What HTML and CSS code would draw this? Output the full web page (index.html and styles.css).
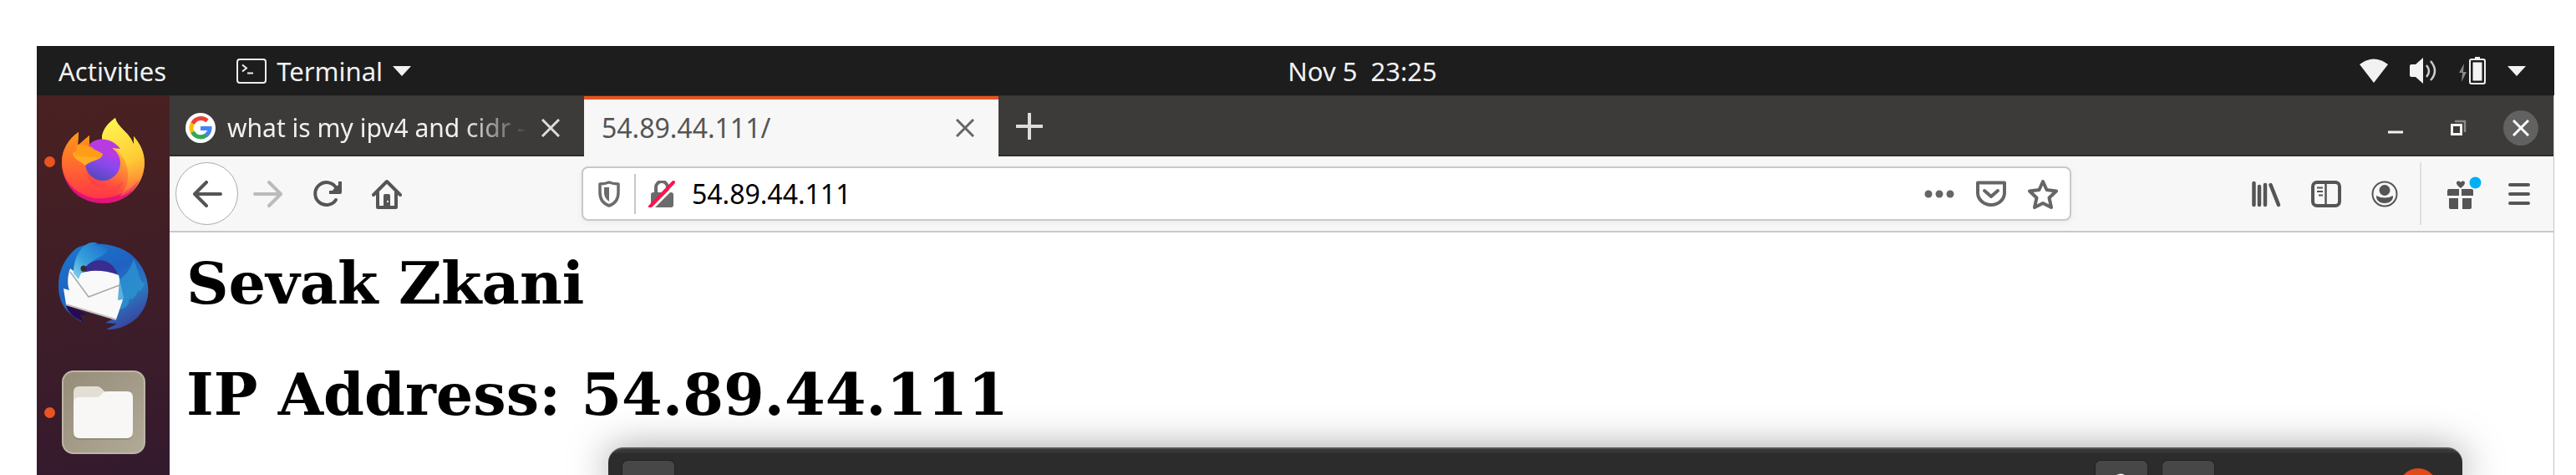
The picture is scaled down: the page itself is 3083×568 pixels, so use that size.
FILE: index.html
```html
<!DOCTYPE html>
<html lang="en">
<head>
<meta charset="utf-8">
<title>54.89.44.111/</title>
<link rel="stylesheet" href="styles.css">
</head>
<body>
<div class="desktop">
  <header class="topbar">
    <div class="topbar-side">
      <button class="top-btn">Activities</button>
      <button class="top-btn app-menu">
        <svg width="36" height="30" viewBox="0 0 36 30" fill="none"><rect x="1" y="1" width="34" height="28" rx="3" stroke="#eee" stroke-width="2"/><path d="M7 7.500l5 4-5 4" stroke="#eee" stroke-width="2"/><path d="M13 17.500h7" stroke="#eee" stroke-width="2"/></svg>
        <span>Terminal</span>
        <svg width="22" height="12" viewBox="0 0 22 12"><path d="M0 0h22L11 12z" fill="#f2f2f2"/></svg>
      </button>
    </div>
    <button class="top-btn clock">Nov 5&nbsp; 23:25</button>
    <div class="topbar-side tray">
      <svg width="34" height="30" viewBox="0 0 34 30"><path d="M0 7Q17-6 34 7L17 29z" fill="#f2f2f2"/></svg>
      <svg width="34" height="32" viewBox="0 0 34 32" fill="none"><path d="M1 10q0-2 2-2h5l9-8v31l-9-8H3q-2 0-2-2z" fill="#f2f2f2"/><path d="M21 9q6 7 0 14M26 4q10 12 0 23" stroke="#ccc" stroke-width="2.500"/></svg>
      <svg width="34" height="34" viewBox="0 0 34 34" fill="none"><path d="M7 8L1 19h4l-1 11 6-12H6z" fill="#888"/><path d="M20 0h6v3h-6z" fill="#f2f2f2"/><rect x="14" y="3" width="18" height="29" rx="2" stroke="#f2f2f2" stroke-width="2"/><path d="M17.500 6.500h11v22h-11z" fill="#f2f2f2"/></svg>
      <svg width="22" height="12" viewBox="0 0 22 12"><path d="M0 0h22L11 12z" fill="#f2f2f2"/></svg>
    </div>
  </header>

  <div class="workspace">
    <nav class="dock">
      <button class="dock-item running" aria-label="Firefox">
        <svg width="108" height="108" viewBox="0 0 108 108">
          <defs>
            <linearGradient id="fx" x1=".75" y1=".1" x2=".3" y2="1"><stop offset="0" stop-color="#fff44f"/><stop offset=".3" stop-color="#ffb42e"/><stop offset=".55" stop-color="#ff7139"/><stop offset=".78" stop-color="#ff3647"/><stop offset="1" stop-color="#e31587"/></linearGradient>
            <linearGradient id="fy" x1=".3" y1="0" x2=".6" y2="1"><stop offset="0" stop-color="#fff44f"/><stop offset=".6" stop-color="#ffcb36"/><stop offset="1" stop-color="#ff8a3a" stop-opacity=".3"/></linearGradient>
            <linearGradient id="fp" x1=".7" y1="0" x2=".3" y2="1"><stop offset="0" stop-color="#c139e6"/><stop offset=".5" stop-color="#8a48ee"/><stop offset="1" stop-color="#5148b8"/></linearGradient>
            <linearGradient id="fo" x1="0" y1="0" x2="0" y2="1"><stop offset="0" stop-color="#ff9a16"/><stop offset=".5" stop-color="#ff6a30"/><stop offset="1" stop-color="#ff3647"/></linearGradient>
          </defs>
          <path d="M24 19l-1 16 14-12v12l15-8C53 17 60 9 68 2c2 11 18 18 22 32v-10c9 10 13 21 13 31 0 28-22 49-49 49S4 84 4 55C4 40 12 27 24 19z" fill="url(#fx)"/>
          <path d="M7 71c14 27 56 42 90 5-9 20-26 28-43 28C31 104 13 92 7 71z" fill="#df0f7b" opacity=".85"/>
          <path d="M52 33C50 18 58 9 68 2c2 11 18 18 22 32v-10c12 14 15 31 11 45-4 14-15 24-28 27 15-15 13-42-4-56z" fill="url(#fy)"/>
          <path d="M24 19l-1 16 14-12v12c4 3 9 6 15 11l2 3c-9 2-21 4-21 14 0 24 30 30 44 14-2 16-18 23-34 21C22 94 4 78 4 55 4 40 12 27 24 19z" fill="url(#fo)"/>
          <path d="M37 23h15v7L39 37z" fill="#482121"/>
          <circle cx="53" cy="56" r="21" fill="url(#fp)"/>
          <path d="M36 35c8-11 28-10 38 4l-11-1c6 6 8 11 7 15z" fill="#b83be2"/>
          <path d="M17 44c7-3 16-3 22-1l14 2c-1 8-13 7-21 14-6-6-13-6-15-15z" fill="#ffad22"/>
          <path d="M23 34c8-1 17 4 30 11l-4 5-30-3z" fill="#ff9c18"/>
        </svg>
      </button>
      <button class="dock-item" aria-label="Thunderbird">
        <svg width="108" height="108" viewBox="0 0 108 108">
          <defs>
            <linearGradient id="tb" x1=".2" y1="0" x2=".8" y2="1"><stop offset="0" stop-color="#1b76cc"/><stop offset=".4" stop-color="#1f62c2"/><stop offset=".7" stop-color="#2c77bd"/><stop offset="1" stop-color="#3a3c9c"/></linearGradient>
            <linearGradient id="th" x1="0" y1="1" x2="1" y2="0"><stop offset="0" stop-color="#8ed3ee"/><stop offset=".4" stop-color="#36a0dc"/><stop offset="1" stop-color="#1c6dca"/></linearGradient>
          </defs>
          <path d="M20 9C32 0 70-2 92 20c20 22 20 52 3 70-10 10-24 16-38 15l13-7-14-1 12-6L9 76l19 20C10 86 0 74 0 53 0 34 7 21 20 9z" fill="url(#tb)"/>
          <path d="M9 76c5 3 17 6 26 12l-9-1 3 8C19 92 11 84 9 76z" fill="#250a54"/>
          <path d="M32 30c14-13 32-9 39 9-10-3-25-4-39 0z" fill="#3a2c91"/>
          <path d="M14 32l8 6 17-3q18-1 33 5l6 27-9 26L9 75 6 56l7 2c-3-8-2-18 1-26z" fill="#f9f9fa"/>
          <path d="M14 36l22 30 37-14" fill="none" stroke="#aaa" stroke-width="1.500"/>
          <path d="M9 75l60 18" stroke="#c5c5c5" stroke-width="2"/>
          <path d="M18 38C18 14 33-4 47 2l-5 2c19 1 23 7 4 16-13 7-18 14-22 25z" fill="url(#th)"/>
          <path d="M73 45c8-4 14-15 17-24 7 17 8 32 14 27-3 10-8 13-9 10-2 9-9 13-10 10 0 8-7 13-11 13l3-12-6 1z" fill="#2b96d2" opacity=".75"/>
          <circle cx="30" cy="32" r="3.500" fill="#31302b"/>
        </svg>
      </button>
      <button class="dock-item running" aria-label="Files">
        <svg width="108" height="108" viewBox="0 0 108 108">
          <defs><linearGradient id="ff" x1="0" y1="0" x2="1" y2="1"><stop offset="0" stop-color="#958d78"/><stop offset=".5" stop-color="#a39b88"/><stop offset="1" stop-color="#b0aa97"/></linearGradient></defs>
          <rect x="5" y="5" width="98" height="98" rx="13" fill="url(#ff)" stroke="#bbb7a6" stroke-width="2"/>
          <path d="M18 30q0-7 7-7h21q3 0 5 2l5 5v10l-38 30z" fill="#e3dfd5"/>
          <path d="M18 44q0-7 7-7h20q3 0 5-2l3-3q2-2 5-2h24q7 0 7 7v42q0 8-7 8H25q-7 0-7-8z" fill="#776f5e" opacity=".4"/>
          <path d="M18 43q0-7 7-7h20q3 0 5-2l3-3q2-2 5-2h24q7 0 7 7v41q0 8-7 8H25q-7 0-7-8z" fill="#f8f7f6"/>
        </svg>
      </button>
    </nav>

    <main class="browser">
      <div class="tabstrip">
        <div class="tab">
          <svg width="36" height="36" viewBox="0 0 36 36" fill="none" stroke-width="5"><circle cx="18" cy="18" r="18" fill="#fff"/><path d="M26 9.500A11 11 0 0 0 8.500 13" stroke="#ea4335"/><path d="M8.500 12.500a11 11 0 0 0 0 11" stroke="#fbbc05"/><path d="M8.500 23A11 11 0 0 0 25 26.500" stroke="#34a853"/><path d="M18 18.500h11q0 5-4.500 8.500" stroke="#4285f4"/></svg>
          <span class="tab-title fade">what is my ipv4 and cidr -</span>
          <button class="icon-btn" aria-label="Close tab"><svg width="22" height="22" viewBox="0 0 22 22" stroke="#ddd" stroke-width="3"><path d="M1 1l20 20M21 1L1 21"/></svg></button>
        </div>
        <div class="tab active">
          <span class="tab-title">54.89.44.111/</span>
          <button class="icon-btn" aria-label="Close tab"><svg width="22" height="22" viewBox="0 0 22 22" stroke="#666" stroke-width="3"><path d="M1 1l20 20M21 1L1 21"/></svg></button>
        </div>
        <button class="icon-btn new-tab" aria-label="New tab"><svg width="32" height="32" viewBox="0 0 32 32" stroke="#ddd" stroke-width="4"><path d="M16 0v32M0 16h32"/></svg></button>
        <div class="window-controls">
          <button class="icon-btn win" aria-label="Minimize"><svg width="20" height="20" viewBox="0 0 20 20"><path d="M1 15h18" stroke="#f2f2f2" stroke-width="3"/></svg></button>
          <button class="icon-btn win" aria-label="Restore"><svg width="20" height="20" viewBox="0 0 20 20" fill="none"><path d="M6 2h12v13" stroke="#888" stroke-width="2.500"/><path d="M2.500 6.500h11v11h-11z" stroke="#f2f2f2" stroke-width="3"/></svg></button>
          <button class="icon-btn win close" aria-label="Close"><svg width="20" height="20" viewBox="0 0 20 20" stroke="#fff" stroke-width="3"><path d="M1 1l18 18M19 1L1 19"/></svg></button>
        </div>
      </div>

      <div class="toolbar">
        <div class="nav-buttons">
          <button class="icon-btn back" aria-label="Back"><svg width="36" height="32" viewBox="0 0 36 32" fill="none" stroke="#555" stroke-width="4" stroke-linecap="round" stroke-linejoin="round"><path d="M34 16H3M17 2L3 16l14 14"/></svg></button>
          <button class="icon-btn nav" aria-label="Forward"><svg width="36" height="32" viewBox="0 0 36 32" fill="none" stroke="#bbb" stroke-width="4" stroke-linecap="round" stroke-linejoin="round"><path d="M2 16h31M19 2l14 14-14 14"/></svg></button>
          <button class="icon-btn nav" aria-label="Reload"><svg width="36" height="36" viewBox="0 0 36 36" fill="none" stroke="#555" stroke-width="4"><path d="M28 25A13.500 13.500 0 1 1 28.500 11" stroke-linecap="round"/><path d="M33 3v13H20" stroke-linejoin="round"/><path d="M28 9l5-3v10H22z" fill="#555" stroke="none"/></svg></button>
          <button class="icon-btn nav" aria-label="Home"><svg width="36" height="36" viewBox="0 0 36 36" fill="none" stroke="#555" stroke-width="4" stroke-linejoin="round" stroke-linecap="round"><path d="M2 19L18 3l16 16M7 16v18h22V16"/><path d="M14 35V20q0-2 2-2h4q2 0 2 2v15z" fill="#555" stroke="none"/><path d="M18 26h2v2h-2z" fill="#fff" stroke="none"/></svg></button>
        </div>
        <div class="urlbar">
          <svg width="26" height="32" viewBox="0 0 26 32" fill="none" stroke="#6b6b6b"><path d="M13 2q5 2 11 2v10c0 9-5 14-11 16C7 28 2 23 2 14V4q6 0 11-2z" stroke-width="3.500" stroke-linejoin="round"/><path d="M13 8v17c-4-3-6-6-6-11V8z" fill="#6b6b6b" stroke="none"/></svg>
          <span class="url-divider"></span>
          <svg width="32" height="32" viewBox="0 0 32 32" fill="none"><path d="M9 15V8a7 7 0 0 1 14 0v7" stroke="#6b6b6b" stroke-width="4"/><rect x="3" y="14" width="27" height="18" rx="3" fill="#6b6b6b"/><path d="M5 33L34 4" stroke="#fff" stroke-width="3"/><path d="M2 31L30 2" stroke="#ff1250" stroke-width="4" stroke-linecap="round"/></svg>
          <input class="url-input" type="text" aria-label="Address" value="54.89.44.111">
          <div class="url-actions">
            <button class="icon-btn" aria-label="Page actions"><svg width="36" height="36" viewBox="0 0 36 36" fill="#666"><circle cx="5" cy="18" r="4.500"/><circle cx="18" cy="18" r="4.500"/><circle cx="31" cy="18" r="4.500"/></svg></button>
            <button class="icon-btn" aria-label="Save to Pocket"><svg width="36" height="36" viewBox="0 0 36 36" fill="none" stroke="#666" stroke-width="4" stroke-linejoin="round" stroke-linecap="round"><path d="M2 4.500h32v12a16 14.500 0 0 1-32 0z"/><path d="M10 14l8 7 8-7"/></svg></button>
            <button class="icon-btn" aria-label="Bookmark"><svg width="36" height="36" viewBox="0 0 36 36" fill="none" stroke="#666" stroke-width="4" stroke-linejoin="round"><path d="M18 3l4.500 10L34 14.500l-8.500 8L28 34l-10-5-10 5 2.500-11.500L2 14.500 13.500 13z"/></svg></button>
          </div>
        </div>
        <div class="toolbar-end">
          <button class="icon-btn" aria-label="Library"><svg width="36" height="32" viewBox="0 0 36 32" fill="none" stroke="#555" stroke-width="4.500" stroke-linecap="round"><path d="M3.500 3v26M10 7v22M17 5v24M23.500 5L33 29"/></svg></button>
          <button class="icon-btn" aria-label="Sidebars"><svg width="36" height="32" viewBox="0 0 36 32" fill="none" stroke="#555"><rect x="2" y="2" width="32" height="28" rx="5" stroke-width="4"/><path d="M17.500 3v26" stroke-width="2.500"/><path d="M7 8.500h7M7 13h7M9 17.500h5" stroke-width="2"/></svg></button>
          <button class="icon-btn" aria-label="Account"><svg width="32" height="32" viewBox="0 0 32 32" fill="none"><circle cx="16" cy="16" r="14.500" stroke="#555" stroke-width="2"/><circle cx="16" cy="11.500" r="6.500" fill="#555"/><path d="M6 18q10 5 20 0c1 12-21 12-20 0z" fill="#555"/></svg></button>
          <span class="toolbar-divider"></span>
          <button class="icon-btn gift" aria-label="What's new"><svg width="42" height="42" viewBox="0 0 42 42" fill="#555"><path d="M16 14C7 8 12 3 16 7c4-4 9 1 0 7z"/><path d="M0 17q0-2 2-2h12v8H0zM17 15h12q2 0 2 2v6H17zM2 26h11v13H4q-2 0-2-2zM18 26h11v11q0 2-2 2h-9z"/><circle cx="33.500" cy="7.500" r="7" fill="#00b0f4"/></svg></button>
          <button class="icon-btn" aria-label="Menu"><svg width="28" height="28" viewBox="0 0 28 28" stroke="#555" stroke-width="4" stroke-linecap="round"><path d="M3 3h22M3 14h22M3 25h22"/></svg></button>
        </div>
      </div>

      <article class="page">
        <h1>Sevak Zkani</h1>
        <h1>IP Address: 54.89.44.111</h1>
      </article>
    </main>
  </div>

  <section class="terminal" aria-label="Terminal">
    <button class="term-btn" aria-label="New tab"></button>
    <div class="term-end">
      <button class="term-btn" aria-label="Search"><svg width="20" height="20" viewBox="0 0 20 20"><circle cx="9" cy="9" r="7" fill="none" stroke="#f2f2f2" stroke-width="3"/></svg></button>
      <button class="term-btn" aria-label="Menu"></button>
      <button class="term-close" aria-label="Close terminal"></button>
    </div>
  </section>
</div>
</body>
</html>
```
FILE: styles.css
```css
* { box-sizing: border-box; }

body {
  margin: 0;
  height: 100vh;
  overflow: hidden;
  background: #fff;
  font-family: "Noto Sans", sans-serif;
  font-size: 32px;
}

svg { display: block; flex: none; }

button {
  margin: 0;
  padding: 0;
  border: 0;
  background: none;
  color: inherit;
  font: inherit;
}

.desktop {
  position: relative;
  display: flex;
  flex-direction: column;
  height: 100%;
  padding: 55px 26px 0 44px;
}

/* System bar */
.topbar {
  display: grid;
  grid-template-columns: 1fr auto 1fr;
  align-items: center;
  height: 59px;
  flex: none;
  padding: 0 34px 0 26px;
  background: #1d1d1d;
  color: #f2f2f2;
  font-size: 31px;
}

.topbar-side { display: flex; align-items: center; gap: 84px; }
.top-btn { line-height: 40px; white-space: nowrap; }
.app-menu { display: flex; align-items: center; gap: 12px; }
.clock { margin-left: 168px; }
.tray { justify-content: flex-end; gap: 25px; }

.workspace { display: flex; flex: 1; min-height: 0; }

/* Dock */
.dock {
  display: flex;
  flex-direction: column;
  gap: 42px;
  width: 159px;
  flex: none;
  padding: 25px 0 0 9px;
  overflow: hidden;
  background: linear-gradient(170deg, #4a2121, #341a2e);
}

.dock-item { display: flex; align-items: center; gap: 4px; }

.dock-item::before {
  content: "";
  width: 13px;
  height: 13px;
  border-radius: 50%;
}

.running::before { background: #e95420; }

/* Browser */
.browser {
  display: flex;
  flex-direction: column;
  flex: 1;
  min-width: 0;
  border-right: 1px solid #c4c4c4;
  background: #fff;
}

.tabstrip {
  display: flex;
  height: 73px;
  flex: none;
  background: #3d3b39;
  border-top: 1px solid #353333;
  box-shadow: inset 0 -2px #2c2b2a;
  color: #f0f0f0;
}

.icon-btn { display: flex; align-items: center; justify-content: center; flex: none; }

.tab {
  display: flex;
  align-items: center;
  gap: 14px;
  width: 496px;
  padding: 4px 29px 0 19px;
}

.tab.active {
  background: #f7f7f7;
  border-top: 4px solid #e95420;
  color: #555;
  padding-top: 0;
  padding-left: 21px;
}

.tab-title { flex: 1; min-width: 0; white-space: nowrap; line-height: 44px; }
.fade { font-size: 30px; mask-image: linear-gradient(to right, #000 78%, transparent); }
.new-tab { padding: 0 21px; }

.window-controls { display: flex; align-items: center; gap: 33px; margin-left: auto; padding: 4px 18px 0 0; }
.win { width: 42px; height: 42px; border-radius: 50%; }
.win.close { background: #616161; }

.toolbar {
  display: flex;
  align-items: center;
  height: 91px;
  flex: none;
  padding: 0 27px 0 7px;
  background: #f7f7f7;
  border-bottom: 2px solid #c8c8c8;
}

.nav-buttons { display: flex; align-items: center; width: 486px; }
.back { width: 75px; height: 75px; border: 1px solid #aaa; border-radius: 50%; background: #fff; }
.nav { width: 71px; height: 71px; }

.urlbar {
  display: flex;
  align-items: center;
  flex: 1;
  height: 65px;
  padding: 0 14px 0 18px;
  border: 2px solid #c8c8c8;
  border-radius: 8px;
  background: #fff;
  box-shadow: 0 2px 8px #0000000d;
}

.url-divider { width: 2px; height: 48px; margin: 0 15px 0 17px; background: #c8c8c8; }

.url-input {
  flex: 1;
  min-width: 0;
  margin-left: 20px;
  padding: 0;
  border: 0;
  background: none;
  color: #000;
  font: inherit;
}

.url-actions { display: flex; gap: 26px; }

.toolbar-end { display: flex; align-items: center; gap: 36px; margin-left: 215px; }
.toolbar-divider { width: 2px; height: 75px; margin: 0 -5px 0 -10px; background: #e0e0e0; }
.gift { margin-right: -6px; }

.page { padding: 20px; flex: 1; min-height: 0; overflow: hidden; }

.page h1 {
  margin: 0 0 51px;
  font-family: "DejaVu Serif", serif;
  font-size: 70px;
  line-height: 82px;
  font-weight: 700;
  white-space: nowrap;
}

/* Terminal window overlapping the browser */
.terminal {
  position: absolute;
  top: 535px;
  left: 728px;
  right: 136px;
  bottom: 0;
  display: flex;
  justify-content: space-between;
  align-items: flex-start;
  padding: 14px 30px 0 17px;
  border-top: 2px solid #555;
  border-radius: 18px 18px 0 0;
  background: linear-gradient(#383838 4px, #2c2c2c 5px);
  box-shadow: 0 6px 48px #00000080;
}

.term-btn { width: 62px; height: 17px; padding-top: 15px; overflow: hidden; border-radius: 6px 6px 0 0; background: #474747; box-shadow: 0 0 0 1px #222; }
.term-btn svg { margin: 0 auto; }
.term-end { display: flex; gap: 18px; }
.term-close { width: 46px; height: 8px; margin: 9px 0 0 203px; overflow: hidden; }
.term-close::before { content: ""; display: block; width: 46px; height: 46px; border-radius: 50%; background: #e04b16; }
```
